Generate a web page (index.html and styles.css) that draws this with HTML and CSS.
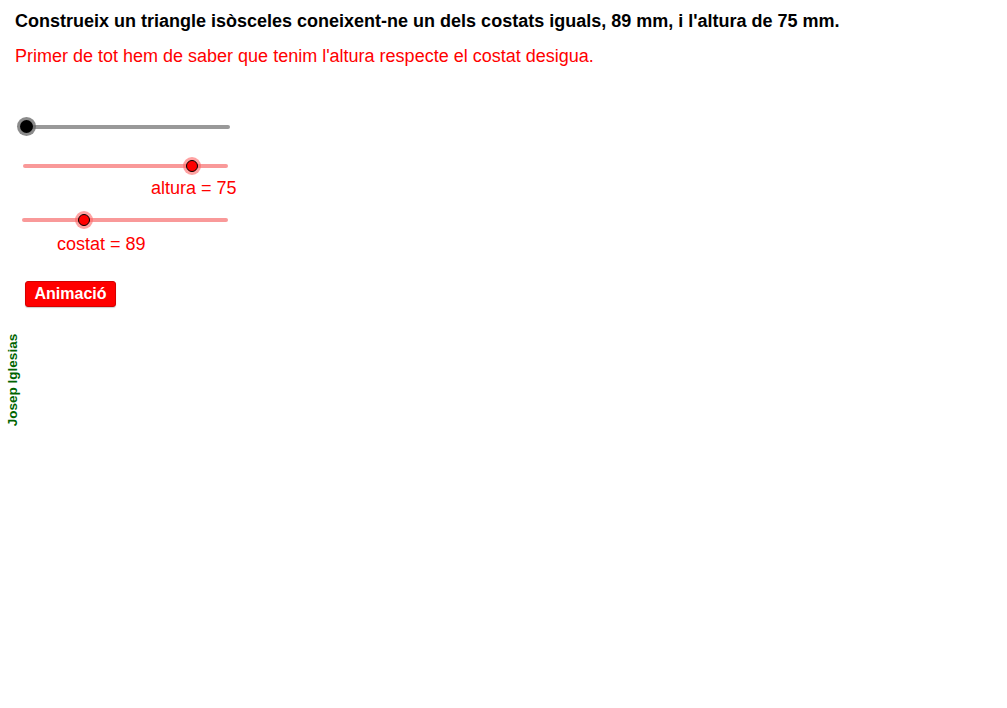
FILE: index.html
```html
<!DOCTYPE html>
<html>
<head>
<meta charset="utf-8">
<link rel="stylesheet" href="styles.css">
</head>
<body>
<div class="canvas">
  <div class="title">Construeix un triangle isòsceles coneixent-ne un dels costats iguals, 89 mm, i l'altura de 75 mm.</div>
  <div class="subtitle">Primer de tot hem de saber que tenim l'altura respecte el costat desigua.</div>

  <div class="slider s1"><div class="track"></div><div class="knob black" style="left:0px"></div></div>
  <div class="slider s2"><div class="track"></div><div class="knob red" style="left:163px"></div></div>
  <div class="label l2">altura = 75</div>
  <div class="slider s3"><div class="track"></div><div class="knob red" style="left:56px"></div></div>
  <div class="label l3">costat = 89</div>

  <button class="anim">Animació</button>
  <div class="author">Josep Iglesias</div>
</div>
</body>
</html>
```
FILE: styles.css
```css
html, body { margin: 0; padding: 0; background: #fff; }
.canvas { position: relative; width: 1007px; height: 708px; overflow: hidden; font-family: "Liberation Sans", Arial, sans-serif; }
.title { position: absolute; left: 15px; top: 11px; font-size: 18px; line-height: 20px; font-weight: bold; color: #000; white-space: nowrap; }
.subtitle { position: absolute; left: 15px; top: 46px; font-size: 18px; line-height: 20px; color: #ff0000; white-space: nowrap; }
.slider { position: absolute; height: 4px; }
.slider .track { position: absolute; left: 0; right: 0; top: 0; height: 4px; border-radius: 2px; }
.s1 { left: 24px; top: 125px; width: 206px; }
.s1 .track { background: #999999; }
.s2 { left: 23px; top: 164px; width: 205px; }
.s2 .track { background: #f99999; }
.s3 { left: 22px; top: 218px; width: 206px; }
.s3 .track { background: #f99999; }
.knob { position: absolute; border-radius: 50%; box-sizing: border-box; }
.knob.black { background: #000; box-shadow: 0 0 0 3px rgba(100,100,100,0.75); top: -5px; margin-left: -4px; width: 13px; height: 13px; }
.knob.red { background: #ff0000; border: 1px solid #000; width: 12px; height: 12px; top: -4px; box-shadow: 0 0 0 3px rgba(255,100,100,0.6); }
.label { position: absolute; font-size: 18px; line-height: 20px; color: #ff0000; white-space: nowrap; }
.l2 { left: 151px; top: 178px; }
.l3 { left: 57px; top: 234px; }
.anim { position: absolute; left: 25px; top: 281px; width: 91px; height: 26px; padding: 0; margin: 0; background: #ff0000; color: #fff; border: 1px solid #d40000; border-radius: 3px; font-family: "Liberation Sans", Arial, sans-serif; font-weight: bold; font-size: 16px; line-height: 24px; box-shadow: 0 1px 1px rgba(0,0,0,0.2); }
.author { position: absolute; left: 13px; top: 380px; transform: translate(-50%, -50%) rotate(-90deg); font-size: 13.5px; line-height: 14px; font-weight: bold; color: #006400; white-space: nowrap; }
```
